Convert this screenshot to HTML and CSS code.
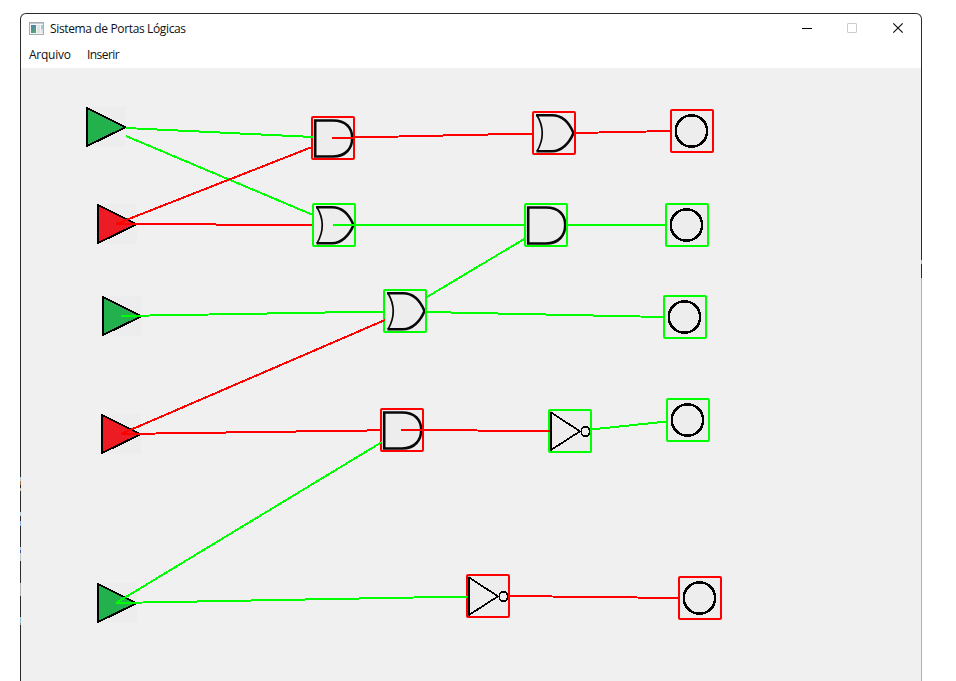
FILE: index.html
```
<!DOCTYPE html>
<html lang="pt-BR">
<head>
<meta charset="utf-8">
<title>Sistema de Portas Lógicas</title>
<link rel="stylesheet" href="styles.css">
</head>
<body>
<main class="window">
  <header class="titlebar">
    <svg class="app-icon" width="15" height="13" viewBox="0 0 15 13">
      <defs><linearGradient id="pane" x1="0" y1="0" x2="0.4" y2="1"><stop offset="0" stop-color="#4d7fb5"/><stop offset="1" stop-color="#58a474"/></linearGradient></defs>
      <rect x=".5" y=".5" width="14" height="12" fill="#f4f5f6" stroke="#a5adb5"/>
      <rect x="1" y="1" width="13" height="1" fill="#c3cad3"/>
      <rect x="2" y="3" width="5" height="8" fill="url(#pane)"/>
      <rect x="8" y="3" width="3" height="8" fill="#e2e4e6"/>
      <rect x="12" y="3" width="2" height="4" fill="#a9c9c5"/>
      <rect x="12" y="7" width="2" height="4" fill="#dce1e4"/>
    </svg>
    <h1 class="title">Sistema de Portas Lógicas</h1>
    <svg class="controls" width="102" height="12" viewBox="0 0 102 12">
      <path d="M0 6.5H10" stroke="#000"/>
      <rect x="45.5" y="1.5" width="9" height="9" rx=".5" fill="none" stroke="#ccc"/>
      <path d="M91.3 1.3l9.4 9.4m0-9.4l-9.4 9.4" stroke="#111" stroke-width="1.2"/>
    </svg>
  </header>
  <nav class="menu"><span class="arquivo">Arquivo</span><span class="inserir">Inserir</span></nav>
  <svg class="circuit" width="900" height="613" viewBox="21 68 900 613">
    <defs>
      <g id="box"><rect x="1" y="1" width="42" height="42" rx="1"/></g>
      <g id="and"><rect x="2" y="2" width="40" height="40" class="tile"/><path class="ink" d="M4.2 4.5H22C35 4.5 41.2 12 41.2 22S35 40.5 22 40.5H4.2Z"/></g>
      <g id="or"><rect x="2" y="2" width="40" height="40" class="tile"/><path class="ink" d="M4 4.2H20C30 4.2 37 11 41.5 22C37 33 29 40.3 20 40.3H4.5"/><path class="ink back" d="M5 4.2Q15.5 22 5 40.3"/></g>
      <g id="not"><rect x="2" y="2" width="40" height="40" class="tile"/><path class="thin" d="M3 3.5L32 22.3L3 41"/><path d="M3 2.7V41.7" stroke="#000" stroke-width="2"/><ellipse class="thin" cx="37.4" cy="22.5" rx="4.2" ry="4.8"/></g>
      <g id="out"><rect x="2" y="2" width="40" height="40" class="tile"/><circle class="ring" cx="21.5" cy="22" r="15.7"/></g>
      <g id="in"><rect width="40" height="40" class="tile"/><path class="tri" d="M1 .9L39.5 20.3L1 39Z"/></g>
    </defs>
    <g class="inputs">
      <use href="#in" x="86" y="107" class="fill-on"/>
      <use href="#in" x="97" y="204" class="fill-off"/>
      <use href="#in" x="102" y="296" class="fill-on"/>
      <use href="#in" x="101" y="414" class="fill-off"/>
      <use href="#in" x="97" y="583" class="fill-on"/>
    </g>
    <g class="gates">
      <use href="#and" x="311" y="116"/><use href="#or" x="312" y="203"/>
      <use href="#or" x="532" y="111"/><use href="#and" x="524" y="203"/>
      <use href="#or" x="383" y="289"/><use href="#and" x="380" y="408"/>
      <use href="#not" x="548" y="409"/><use href="#not" x="466" y="574"/>
      <use href="#out" x="670" y="109"/><use href="#out" x="665" y="203"/>
      <use href="#out" x="663" y="295"/><use href="#out" x="666" y="398"/>
      <use href="#out" x="678" y="576"/>
    </g>
    <g class="frame off">
      <use href="#box" x="311" y="116"/><use href="#box" x="532" y="111"/>
      <use href="#box" x="670" y="109"/><use href="#box" x="380" y="408"/>
      <use href="#box" x="466" y="574"/><use href="#box" x="678" y="576"/>
    </g>
    <g class="frame on">
      <use href="#box" x="312" y="203"/><use href="#box" x="524" y="203"/>
      <use href="#box" x="665" y="203"/><use href="#box" x="383" y="289"/>
      <use href="#box" x="663" y="295"/><use href="#box" x="548" y="409"/>
      <use href="#box" x="666" y="398"/>
    </g>
    <g class="wire on">
      <path d="M126 128L313 137M126 136L313 215"/>
      <path d="M333 225H526M568 225H666"/>
      <path d="M427 297L525 238.5M427 312L664 317"/>
      <path d="M121 316L384 311.5"/>
      <path d="M591 429.5L667 421.5"/>
      <path d="M116 603L382 442M116 603L468 596.5"/>
    </g>
    <g class="wire off">
      <path d="M116 224L312 147M116 224L312 225"/>
      <path d="M332 138L533 133.5M575 133L671 131"/>
      <path d="M121 434L385 320M121 434L381 430.3"/>
      <path d="M401 430L550 431"/>
      <path d="M509 596L679 598"/>
    </g>
  </svg>
</main>
</body>
</html>
```
FILE: styles.css
```
* { box-sizing: border-box; }
html, body { margin: 0; height: 681px; overflow: hidden; background: #fff; }
body { padding: 13px 0 0 20px; }
.window {
  width: 902px;
  height: 668px;
  border: 1px solid transparent;
  border-bottom: 0;
  border-radius: 6px 6px 0 0;
  overflow: hidden;
  background:
    linear-gradient(#fff, #fff) padding-box,
    linear-gradient(#2b2b2b 0 464px, #a9c5d6 464px 468px, #a5703a 468px 472px, #2b2b2b 472px 475px, #c9b8a8 475px 478px, #2b2b2b 478px 499px, #a9c5d6 499px 503px, #2b2b2b 503px 508px, #86a6dc 508px 513px, #2b2b2b 513px 534px, #b0c4d4 534px 537px, #3c58a8 537px 540px, #b9c4c4 540px 548px, #2b2b2b 548px 570px, #b0b4b4 570px 583px, #2b2b2b 583px 604px, #8fc8d4 604px 610px, #b08a70 610px 612px, #2b2b2b 612px) left top / 50% 100% no-repeat border-box,
    linear-gradient(#2b2b2b 0 247px, #bbb 247px 251px, #2b2b2b 251px 265px, #b0b0b0 265px) border-box;
  color: #111;
  font: 12px/16px "Open Sans", "Noto Sans", sans-serif;
}
.titlebar { display: flex; height: 29px; padding: 0 17px 1px 8px; align-items: center; }
.app-icon { margin-right: 6px; }
.title { margin: 0; padding-top: 1px; font-size: 12px; font-weight: 400; letter-spacing: -.36px; white-space: nowrap; }
.controls { margin-left: auto; }
.menu { display: flex; gap: 16px; height: 25px; padding: 4px 8px 0; }
.arquivo { width: 42px; letter-spacing: -.25px; }
.inserir { letter-spacing: -.55px; }
.circuit { display: block; background: #f0f0f0; }
.tile { fill: #ededed; }
.ink { fill: none; stroke: #080808; stroke-width: 2.6; }
.back { stroke-width: 1.7; }
.thin { fill: none; stroke: #000; stroke-width: 1.7; shape-rendering: crispEdges; }
.ring { fill: none; stroke: #000; stroke-width: 2.5; shape-rendering: crispEdges; }
.tri { stroke: #000; stroke-width: 2; shape-rendering: crispEdges; }
.fill-on { fill: #22b14c; }
.fill-off { fill: #ed1c24; }
.frame { fill: none; stroke-width: 2; }
.wire { fill: none; stroke-width: 2; shape-rendering: crispEdges; }
.on { stroke: #0f0; }
.off { stroke: #f00; }
.inputs .tile, .gates .tile { stroke: none; }
```
